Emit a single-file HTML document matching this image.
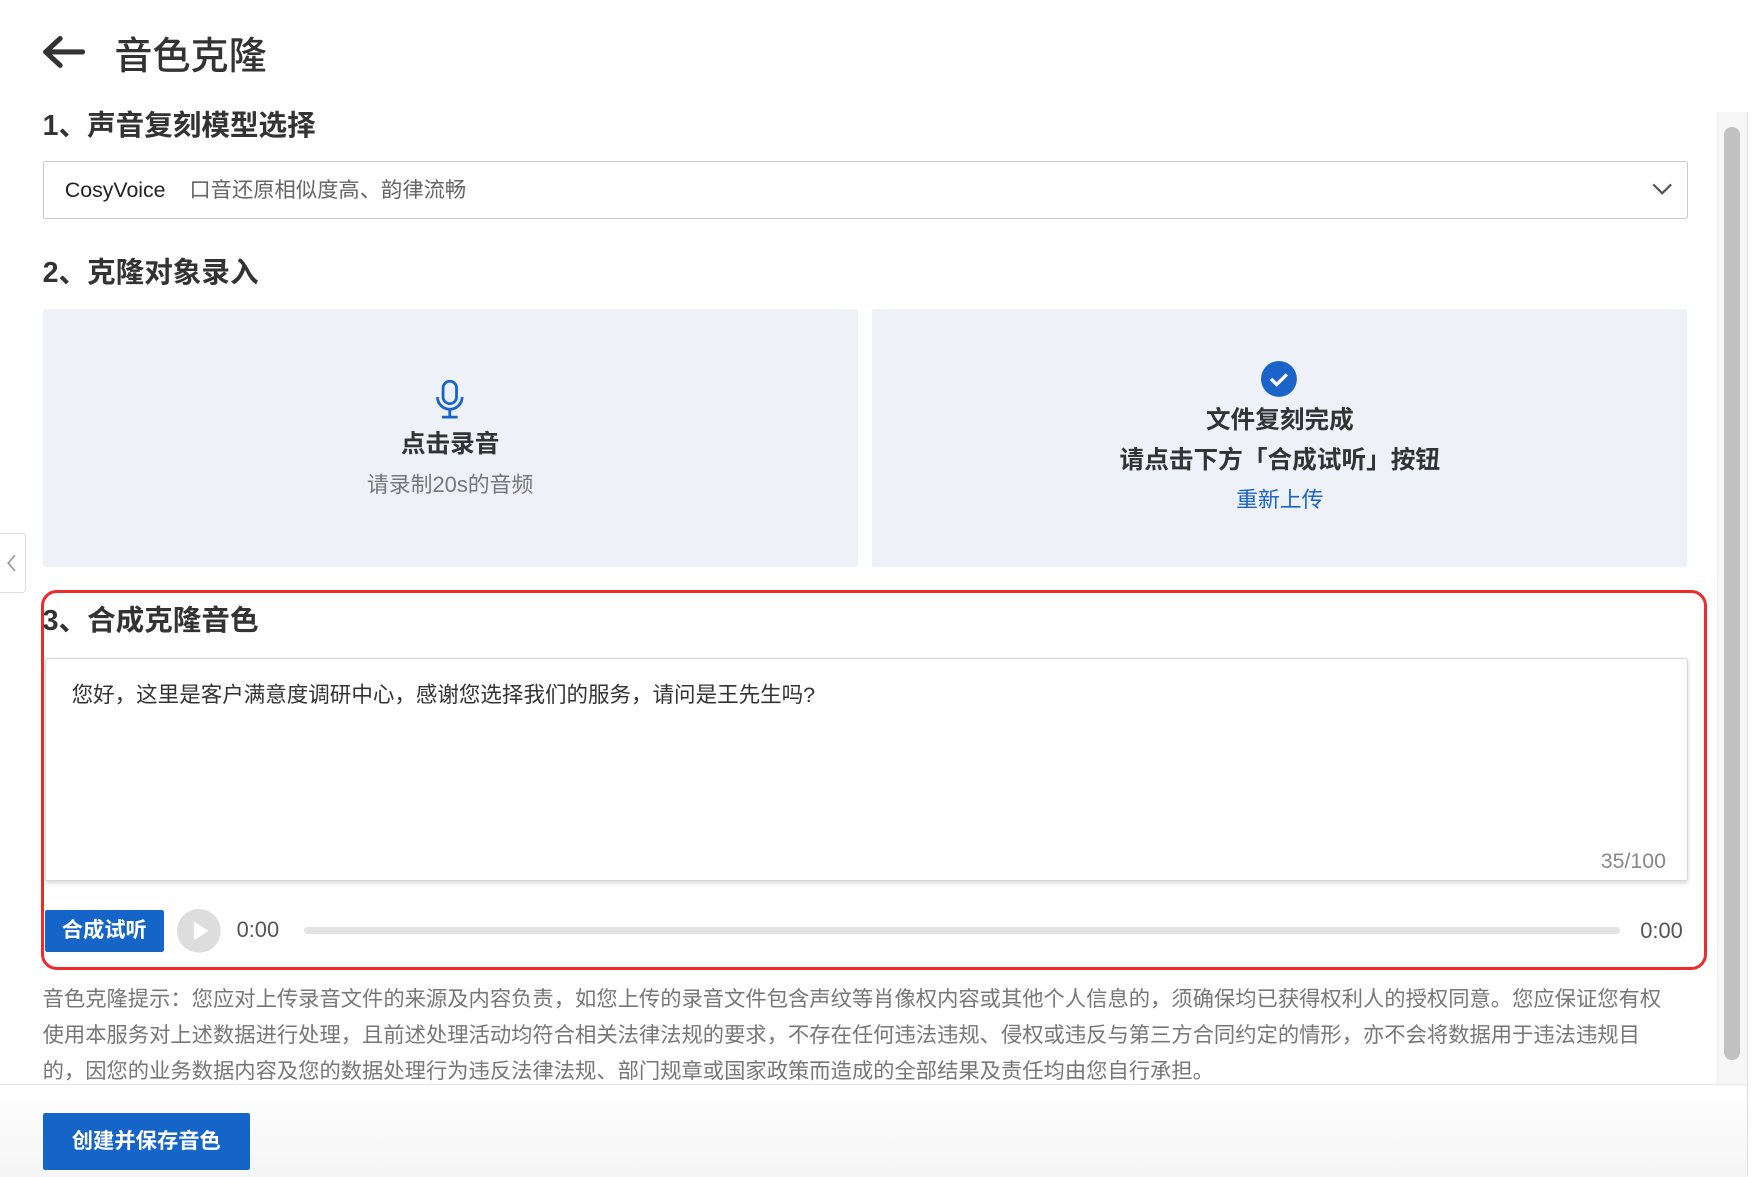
<!DOCTYPE html>
<html><head><meta charset="utf-8"><style>
html,body{margin:0;padding:0;background:#fff;}
body{width:1568px;height:1049px;overflow:hidden;zoom:1.12117;position:relative;font-family:"Liberation Sans","Noto Sans CJK SC",sans-serif;color:#333;}
.a{position:absolute;white-space:nowrap;}
h2{margin:0;font-weight:600;font-size:25.5px;position:absolute;left:38px;color:#333;line-height:30px;}
.card{position:absolute;top:276px;height:230px;width:727px;background:#eef1f8;border-radius:2px;}
.c{position:absolute;left:0;right:0;text-align:center;line-height:30px;}
</style></head><body>
<svg class="a" style="left:36px;top:30px" width="42" height="32" viewBox="0 0 42 32"><path d="M38 16H6M18 4L5 16l13 12" fill="none" stroke="#333" stroke-width="4.5" stroke-linecap="round" stroke-linejoin="round"/></svg>
<div class="a" style="left:102px;top:22px;font-size:34px;font-weight:500;color:#333">音色克隆</div>
<h2 style="top:98px">1、声音复刻模型选择</h2>
<div class="a" style="left:38px;top:144px;width:1466px;height:50px;border:1px solid #ccc;border-radius:2px">
<span class="a" style="left:19px;top:10px;line-height:30px;font-size:19px;color:#222">CosyVoice</span>
<span class="a" style="left:130px;top:10px;line-height:30px;font-size:19px;color:#666">口音还原相似度高、韵律流畅</span>
<svg class="a" style="left:1434px;top:17px" width="20" height="14"><path d="M2 3l8 8 8-8" fill="none" stroke="#555" stroke-width="2"/></svg>
</div>
<h2 style="top:229px">2、克隆对象录入</h2>
<div class="card" style="left:38px">
<svg class="a" style="left:348px;top:62px" width="30" height="36" viewBox="0 0 30 36"><rect x="9" y="2" width="12" height="20" rx="6" fill="none" stroke="#1a63c8" stroke-width="2.5"/><path d="M4 16a11 11 0 0 0 22 0M15 27v6M8 34h14" fill="none" stroke="#1a63c8" stroke-width="2.5"/></svg>
<div class="c" style="top:106px;font-size:22px;font-weight:700;color:#333">点击录音</div>
<div class="c" style="top:141px;font-size:19.5px;color:#777">请录制20s的音频</div>
</div>
<div class="card" style="left:778px">
<svg class="a" style="left:347px;top:46px" width="32" height="32"><circle cx="16" cy="16" r="16" fill="#1a63c8"/><path d="M9 16l5 5 9-9" fill="none" stroke="#fff" stroke-width="3"/></svg>
<div class="c" style="top:84px;font-size:22px;font-weight:700;color:#333">文件复刻完成</div>
<div class="c" style="top:120px;font-size:22px;font-weight:700;color:#333">请点击下方「合成试听」按钮</div>
<div class="c" style="top:155px;font-size:19.5px;color:#1a63c8">重新上传</div>
</div>
<div class="a" style="left:0;top:475px;width:22px;height:52px;background:#fff;border:1px solid #ddd;border-left:none;border-radius:0 3px 3px 0"><svg class="a" style="left:5px;top:17px" width="10" height="18"><path d="M8 2L2 9l6 7" fill="none" stroke="#999" stroke-width="1.5"/></svg></div>
<div class="a" style="left:37px;top:526px;width:1480px;height:334px;border:3px solid #f02a2a;border-radius:14px"></div>
<h2 style="top:540px;left:38px">3、合成克隆音色</h2>
<div class="a" style="left:40px;top:587px;width:1464px;height:197px;border:1px solid #d8d8d8;border-radius:2px;box-shadow:0 2px 4px rgba(0,0,0,.15);background:#fff">
<span class="a" style="left:23px;top:17px;font-size:19.2px;color:#333">您好，这里是客户满意度调研中心，感谢您选择我们的服务，请问是王先生吗?</span>
<span class="a" style="right:19px;top:169px;font-size:19px;color:#888">35/100</span>
</div>
<div class="a" style="left:40px;top:812px;width:106px;height:37px;background:#1565c8;border-radius:2px;color:#fff;font-size:19px;font-weight:700;text-align:center;line-height:37px">合成试听</div>
<svg class="a" style="left:158px;top:811px" width="39" height="39"><circle cx="19.5" cy="19.5" r="19.5" fill="#ddd"/><path d="M15 11v17l13-8.5z" fill="#fff"/></svg>
<span class="a" style="left:211px;top:818px;font-size:19.5px;color:#555">0:00</span>
<div class="a" style="left:271px;top:827px;width:1174px;height:6px;background:#e3e3e3;border-radius:3px"></div>
<span class="a" style="left:1463px;top:819px;font-size:19.5px;color:#555">0:00</span>
<div class="a" style="left:38px;top:876px;width:1462px;font-size:19px;line-height:32px;color:#777;white-space:normal">音色克隆提示：您应对上传录音文件的来源及内容负责，如您上传的录音文件包含声纹等肖像权内容或其他个人信息的，须确保均已获得权利人的授权同意。您应保证您有权使用本服务对上述数据进行处理，且前述处理活动均符合相关法律法规的要求，不存在任何违法违规、侵权或违反与第三方合同约定的情形，亦不会将数据用于违法违规目的，因您的业务数据内容及您的数据处理行为违反法律法规、部门规章或国家政策而造成的全部结果及责任均由您自行承担。</div>
<div class="a" style="left:0;top:967px;width:1558px;height:82px;background:linear-gradient(#fff,#f5f5f5);border-top:1px solid #e6e6e6"></div>
<div class="a" style="left:38px;top:993px;width:185px;height:51px;background:#1565c8;border-radius:2px;color:#fff;font-size:19px;font-weight:700;text-align:center;line-height:51px">创建并保存音色</div>
<div class="a" style="left:1531px;top:100px;width:27px;height:867px;background:#f7f7f7;border-left:1px solid #eee"></div>
<div class="a" style="left:1538px;top:113px;width:14px;height:832px;background:#c1c1c1;border-radius:7px"></div>
<div class="a" style="left:1558px;top:100px;width:1px;height:949px;background:#ddd"></div>
</body></html>
